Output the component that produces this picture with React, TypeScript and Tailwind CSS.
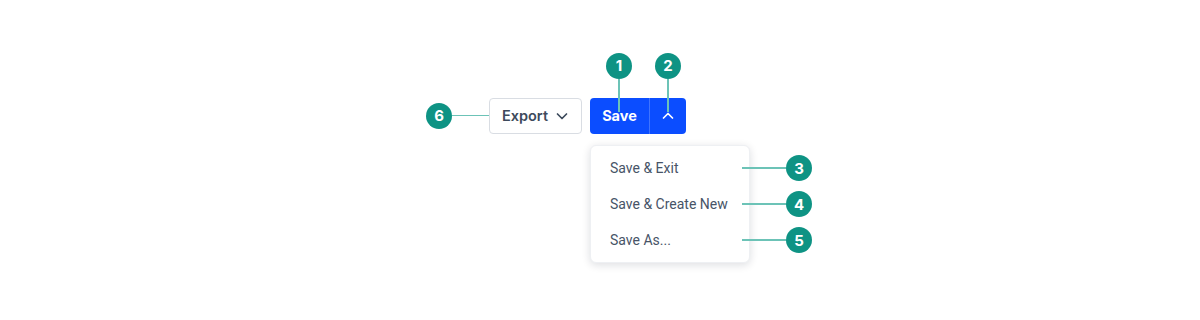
import React from "react";

const Badge = ({ n }: { n: number }) => (
  <div className="w-[26px] h-[26px] rounded-full bg-[#0e9384] text-white flex items-center justify-center text-[15px] font-bold font-['Inter',sans-serif] leading-none shrink-0">
    {n}
  </div>
);

const Chevron = ({ up }: { up?: boolean }) => (
  <svg width="14" height="14" viewBox="0 0 14 14" fill="none">
    <path
      d={up ? "M2.5 9 7 4.5 11.5 9" : "M2.5 5 7 9.5 11.5 5"}
      stroke="currentColor"
      strokeWidth="1.7"
      strokeLinecap="round"
      strokeLinejoin="round"
    />
  </svg>
);

export default function App() {
  const items = [
    { label: "Save & Exit", n: 3 },
    { label: "Save & Create New", n: 4 },
    { label: "Save As...", n: 5 },
  ];
  return (
    <div className="w-[1200px] h-[320px] bg-white font-['Inter',sans-serif]">
      <div className="pt-[97px] pl-[426px] flex flex-col">
        <div className="flex items-center">
          <Badge n={6} />
          <div className="w-[37px] h-[1.5px] bg-[#6cc3b7]" />
          <button className="h-[36px] w-[93px] rounded-[4px] border border-[#d9dde3] bg-white flex items-center justify-center gap-[7px] text-[#3d4a5c] text-[14.5px] font-semibold mt-[1px]">
            Export
            <Chevron />
          </button>
          <div className="ml-[8px] relative flex h-[36px] rounded-[4px] bg-[#0b4dff] text-white">
            <div className="relative w-[59px] flex items-center justify-center text-[14.5px] font-bold">
              Save
              <div className="absolute left-[29px] -top-[45px] flex flex-col items-center -translate-x-1/2">
                <Badge n={1} />
                <div className="w-[1.5px] h-[33px] bg-[#6cc3b7]" />
              </div>
            </div>
            <div className="w-px bg-[#3f74ff]" />
            <div className="relative w-[36px] flex items-center justify-center">
              <Chevron up />
              <div className="absolute left-[18px] -top-[45px] flex flex-col items-center -translate-x-1/2">
                <Badge n={2} />
                <div className="w-[1.5px] h-[33px] bg-[#6cc3b7]" />
              </div>
            </div>
          </div>
        </div>
        <div className="ml-[164px] mt-[11px] w-[160px] rounded-[6px] bg-white shadow-[0_2px_8px_rgba(16,24,40,0.14)] border border-[#eef0f3] py-[4px] font-['Roboto',sans-serif]">
          {items.map((it) => (
            <div key={it.n} className="relative h-[36px] flex items-center pl-[19px] text-[14px] text-[#475467]">
              {it.label}
              <div className="absolute left-[151px] top-1/2 -translate-y-1/2 flex items-center">
                <div className="w-[44px] h-[1.5px] bg-[#6cc3b7]" />
                <Badge n={it.n} />
              </div>
            </div>
          ))}
        </div>
      </div>
    </div>
  );
}
